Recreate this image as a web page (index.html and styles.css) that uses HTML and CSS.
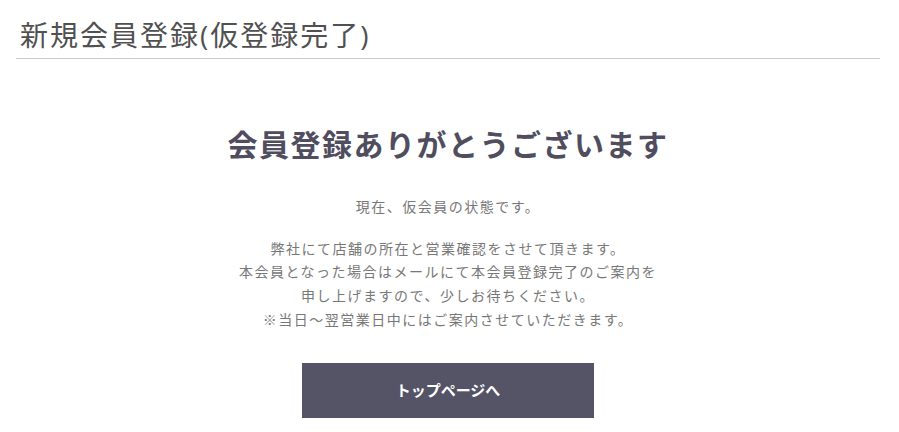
FILE: index.html
```html
<!DOCTYPE html>
<html lang="ja">
<head>
    <meta charset="UTF-8">
    <meta name="viewport" content="width=device-width, initial-scale=1.0">
    <title>新規会員登録(仮登録完了)</title>
    <link rel="stylesheet" href="styles.css">
</head>
<body>
    <div class="page">
        <h1 class="page-title">新規会員登録(仮登録完了)</h1>

        <div class="complete">
            <h2 class="complete-title">会員登録ありがとうございます</h2>
            <p class="complete-text">現在、仮会員の状態です。</p>
            <p class="complete-text">
                弊社にて店舗の所在と営業確認をさせて頂きます。<br>
                本会員となった場合はメールにて本会員登録完了のご案内を<br>
                申し上げますので、少しお待ちください。<br>
                ※当日～翌営業日中にはご案内させていただきます。
            </p>
            <a class="btn" href="#">トップページへ</a>
        </div>
    </div>
</body>
</html>
```

FILE: styles.css
```css
body {
    margin: 0;
    font-family: "Open Sans", "Noto Sans CJK JP", sans-serif;
    background-color: #fff;
    color: #666;
}
.page {
    padding: 15px 19px 0 16px;
}
.page-title {
    margin: 0;
    padding: 0 0 3px 4px;
    font-size: 28px;
    font-weight: normal;
    line-height: 40px;
    letter-spacing: 2px;
    color: #505050;
    border-bottom: 1px solid #ccc;
}
.complete {
    text-align: center;
    padding-top: 64px;
}
.complete-title {
    margin: 0 0 28px;
    font-size: 30px;
    line-height: 44px;
    letter-spacing: 1.5px;
    font-weight: bold;
    color: #4f4d5e;
}
.complete-text {
    margin: 0 0 18px;
    font-size: 14px;
    line-height: 23.7px;
    letter-spacing: 1.5px;
    color: #777;
}
.btn {
    display: inline-block;
    width: 292px;
    height: 55px;
    margin-top: 13px;
    line-height: 55px;
    background-color: #555366;
    color: #fff;
    font-size: 15px;
    font-weight: bold;
    text-decoration: none;
}
```
